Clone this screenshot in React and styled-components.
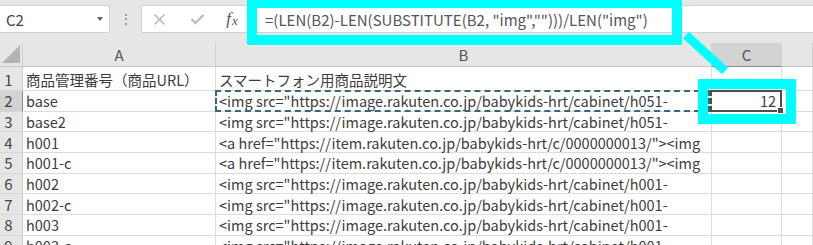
import React from "react";
import styled, { createGlobalStyle, css } from "styled-components";

const Global = createGlobalStyle`
  html, body { margin: 0; padding: 0; background: #ffffff; overflow: hidden; }
  body { width: 813px; height: 245px; font-family: "Noto Sans CJK JP", "Noto Sans", sans-serif; }
`;

const Page = styled.div`
  position: relative;
  width: 813px;
  height: 245px;
  overflow: hidden;
  background: #ffffff;
`;

const Toolbar = styled.div`
  display: flex;
  align-items: flex-start;
  height: 43px;
  padding-top: 5px;
  box-sizing: border-box;
  background: #e6e6e6;
`;

const NameBox = styled.div`
  display: flex;
  align-items: center;
  justify-content: space-between;
  width: 111px;
  height: 28px;
  margin-left: -1px;
  box-sizing: border-box;
  background: #fff;
  border: 1px solid #d2d2d2;
  padding: 0 6px 0 6px;
  font-size: 15px;
  color: #444;
`;

const Caret = styled.span`
  width: 0;
  height: 0;
  border-left: 3.5px solid transparent;
  border-right: 3.5px solid transparent;
  border-top: 4px solid #666;
`;

const Grip = styled.div`
  width: 31px;
  height: 28px;
  display: flex;
  flex-direction: column;
  align-items: center;
  justify-content: center;
  gap: 2.5px;
  span {
    width: 2px;
    height: 2px;
    background: #9a9a9a;
  }
`;

const FxBox = styled.div`
  display: flex;
  align-items: center;
  width: 106px;
  height: 28px;
  box-sizing: border-box;
  background: #fff;
  border: 1px solid #d2d2d2;
  border-right: none;
`;

const FxIcon = styled.span`
  display: flex;
  align-items: center;
  justify-content: center;
  width: ${(p) => p.$w}px;
  height: 26px;
  color: ${(p) => (p.$dark ? "#555" : "#b9b9b9")};
  font-family: ${(p) => (p.$dark ? `"Liberation Serif", serif` : "inherit")};
  font-style: ${(p) => (p.$dark ? "italic" : "normal")};
  font-size: 17px;
`;

const SubX = styled.span`
  font-size: 13px;
  margin-top: 4px;
  margin-left: 1px;
`;

const FormulaInput = styled.div`
  flex: 1;
  height: 28px;
  box-sizing: border-box;
  background: #fff;
  border: 1px solid #d2d2d2;
  border-right: none;
  display: flex;
  align-items: center;
  padding-left: 17px;
  font-size: 15px;
  color: #555;
  white-space: nowrap;
`;

const Sheet = styled.div`
  display: grid;
  grid-template-columns: 23px 193px 496px 70px 1fr;
  grid-template-rows: 24px 24px repeat(8, 20.7px);
  background: #e6e6e6;
`;

const Corner = styled.div`
  position: relative;
  background: #e6e6e6;
  border-right: 1px solid #d0d0d0;
  border-bottom: 1px solid #c8c8c8;
  svg { position: absolute; right: 2px; bottom: 3px; }
`;

const ColHead = styled.div`
  display: flex;
  align-items: center;
  justify-content: center;
  font-size: 15px;
  color: #555;
  background: ${(p) => (p.$active ? "#d3d3d3" : "#e6e6e6")};
  border-right: 1px solid #d0d0d0;
  border-bottom: 1px solid ${(p) => (p.$active ? "#8a8a8a" : "#c8c8c8")};
`;

const RowHead = styled.div`
  display: flex;
  align-items: center;
  justify-content: center;
  padding-right: 5px;
  font-size: 15px;
  color: #444;
  background: ${(p) => (p.$active ? "#d3d3d3" : "#e6e6e6")};
  border-right: 1px solid ${(p) => (p.$active ? "#8a8a8a" : "#c8c8c8")};
  border-bottom: 1px solid #d6d6d6;
  ${(p) => p.$tall && css`padding-top: 2px;`}
`;

const Cell = styled.div`
  position: relative;
  display: flex;
  align-items: center;
  justify-content: ${(p) => (p.$num ? "flex-end" : "flex-start")};
  padding: 0 ${(p) => (p.$num ? "5px" : "0")} 0 ${(p) => (p.$num ? "0" : "3px")};
  ${(p) => p.$tall && css`padding-top: 2px;`}
  background: #fff;
  border-right: 1px solid #dcdcdc;
  border-bottom: 1px solid #dcdcdc;
  font-size: 14.5px;
  color: #3c3c3c;
  white-space: nowrap;
  overflow: visible;
  min-width: 0;
  ${(p) =>
    p.$copied &&
    css`
      &::after {
        content: "";
        position: absolute;
        left: -1px;
        top: -1px;
        right: 1px;
        bottom: -1px;
        border: 2px dashed #3e6576;
        pointer-events: none;
      }
    `}
  ${(p) =>
    p.$selected &&
    css`
      &::after {
        content: "";
        position: absolute;
        left: -2px;
        top: -1px;
        right: -1px;
        bottom: -1px;
        border: 2px solid #4e4e4e;
        border-left-style: dashed;
        pointer-events: none;
      }
      &::before {
        content: "";
        position: absolute;
        right: -3px;
        bottom: -3px;
        width: 5px;
        height: 5px;
        background: #4e4e4e;
        border: 1px solid #fff;
        z-index: 2;
      }
    `}
`;

const Overlay = styled.svg`
  position: absolute;
  left: 0;
  top: 0;
  pointer-events: none;
`;

const imgH051 = '<img src="https://image.rakuten.co.jp/babykids-hrt/cabinet/h051-';
const imgH001 = '<img src="https://image.rakuten.co.jp/babykids-hrt/cabinet/h001-';
const aHref = '<a href="https://item.rakuten.co.jp/babykids-hrt/c/0000000013/"><img';

const rows = [
  { a: "商品管理番号（商品URL）", b: "スマートフォン用商品説明文", c: "" },
  { a: "base", b: imgH051, c: "12" },
  { a: "base2", b: imgH051, c: "" },
  { a: "h001", b: aHref, c: "" },
  { a: "h001-c", b: aHref, c: "" },
  { a: "h002", b: imgH001, c: "" },
  { a: "h002-c", b: imgH001, c: "" },
  { a: "h003", b: imgH001, c: "" },
  { a: "h003-c", b: imgH001, c: "" },
];

export default function App() {
  return (
    <Page>
      <Global />
      <Toolbar>
        <NameBox>
          <span>C2</span>
          <Caret />
        </NameBox>
        <Grip>
          <span />
          <span />
          <span />
        </Grip>
        <FxBox>
          <FxIcon $w={34}>
            <svg width="13" height="13" viewBox="0 0 13 13">
              <path d="M1.5 1.5 L11.5 11.5 M11.5 1.5 L1.5 11.5" stroke="#b9b9b9" strokeWidth="1.6" fill="none" />
            </svg>
          </FxIcon>
          <FxIcon $w={42}>
            <svg width="15" height="12" viewBox="0 0 15 12">
              <path d="M1.5 6 L5.5 10 L13.5 2" stroke="#b9b9b9" strokeWidth="2.2" fill="none" />
            </svg>
          </FxIcon>
          <FxIcon $w={28} $dark>
            <span>f</span>
            <SubX>x</SubX>
          </FxIcon>
        </FxBox>
        <FormulaInput>=(LEN(B2)-LEN(SUBSTITUTE(B2, "img","")))/LEN("img")</FormulaInput>
      </Toolbar>
      <Sheet>
        <Corner>
          <svg width="18" height="18" viewBox="0 0 18 18">
            <polygon points="18,0 18,18 0,18" fill="#b3b3b3" />
          </svg>
        </Corner>
        <ColHead>A</ColHead>
        <ColHead>B</ColHead>
        <ColHead $active>C</ColHead>
        <ColHead />
        {rows.map((r, i) => (
          <React.Fragment key={i}>
            <RowHead $active={i === 1} $tall={i === 0}>{i + 1}</RowHead>
            <Cell $tall={i === 0}>{r.a}</Cell>
            <Cell $tall={i === 0} $copied={i === 1}>{r.b}</Cell>
            <Cell $num $selected={i === 1}>{r.c}</Cell>
            <Cell />
          </React.Fragment>
        ))}
      </Sheet>
      <Overlay width="813" height="245" viewBox="0 0 813 245">
        <rect x="252" y="3" width="425" height="37" fill="none" stroke="#00ffff" strokeWidth="10" />
        <rect x="703" y="84" width="88" height="35" fill="none" stroke="#00ffff" strokeWidth="10" />
        <line x1="686" y1="35" x2="725" y2="71" stroke="#00ffff" strokeWidth="9" />
      </Overlay>
    </Page>
  );
}
